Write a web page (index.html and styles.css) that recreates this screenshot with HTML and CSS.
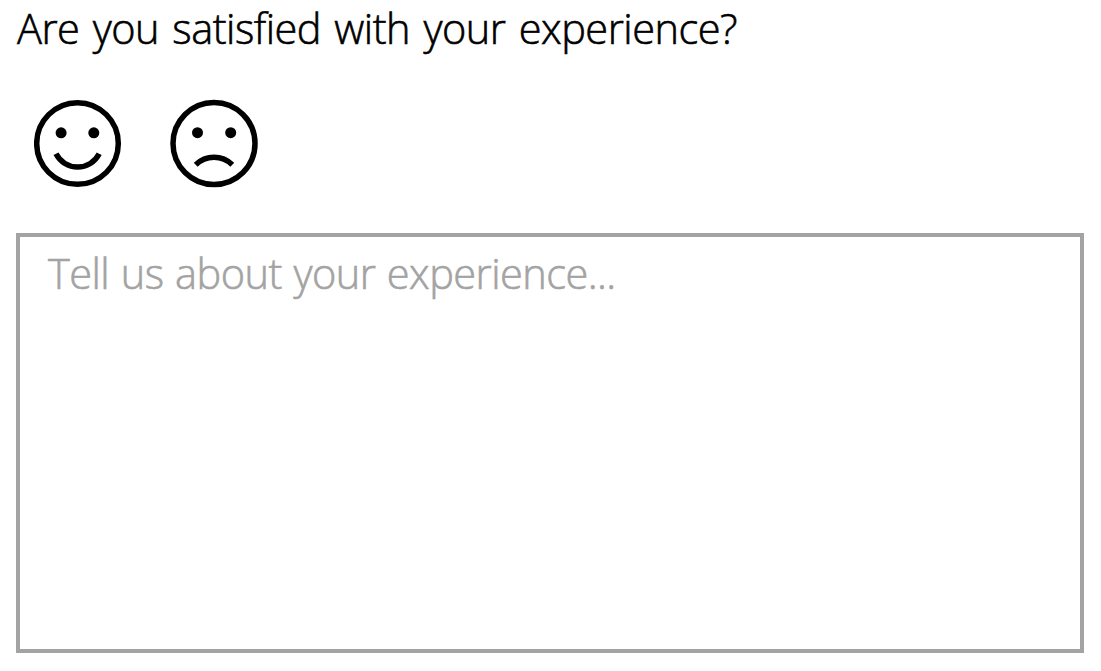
FILE: index.html
```html
<!DOCTYPE html>
<html lang="en">
<head>
<meta charset="utf-8">
<title>Feedback</title>
<link rel="stylesheet" href="styles.css">
</head>
<body>
<main class="feedback">
  <h1 class="question">Are you satisfied with your experience?</h1>
  <div class="ratings">
    <button class="rating" type="button" aria-label="Satisfied">
      <svg class="face" viewBox="0 0 88 89">
        <circle class="line" cx="43.5" cy="44.5" r="40.8"/>
        <circle cx="27.1" cy="33.8" r="5.5"/>
        <circle cx="59.8" cy="33.8" r="5.5"/>
        <path class="line" d="M22 54.8A24.2 24.2 0 0 0 65.2 54.8"/>
      </svg>
    </button>
    <button class="rating" type="button" aria-label="Dissatisfied">
      <svg class="face" viewBox="0 0 88 89">
        <circle class="line" cx="44" cy="44.5" r="41"/>
        <circle cx="27.5" cy="33.7" r="5.5"/>
        <circle cx="60.7" cy="33.7" r="5.5"/>
        <path class="line" d="M25.7 65.8A26 26 0 0 1 62.3 65.8"/>
      </svg>
    </button>
  </div>
  <textarea class="comment" placeholder="Tell us about your experience..."></textarea>
</main>
</body>
</html>
```
FILE: styles.css
```css
* { box-sizing: border-box; }
body { margin: 0; background: #fff; color: #000; font-family: "Open Sans", sans-serif; }
.feedback { display: flex; flex-direction: column; height: 671px; padding: 0 17px 18px 16px; }
.question { margin: 0; height: 99px; padding-left: 1px; font-size: 41.5px; line-height: 56px; font-weight: 300; letter-spacing: -0.5px; word-spacing: 3px; font-variant-ligatures: none; white-space: nowrap; -webkit-text-stroke: 0.6px #000; }
.ratings { display: flex; gap: 48px; height: 134px; padding-left: 18px; }
.rating { width: 88px; height: 89px; padding: 0; border: 0; background: none; }
.face { display: block; width: 88px; height: 89px; }
.line { fill: none; stroke: #000; stroke-width: 5.5; }
.comment { flex: 1; width: 100%; margin: 0; padding: 8px 28px; border: 4px solid #a3a3a3; border-radius: 0; outline: 0; resize: none; background: #fff; font: 300 41.5px/56px "Open Sans", sans-serif; letter-spacing: -0.55px; word-spacing: 1.4px; }
.comment::placeholder { color: #a3a3a3; opacity: 1; -webkit-text-stroke: 0.6px #a3a3a3; }
```
